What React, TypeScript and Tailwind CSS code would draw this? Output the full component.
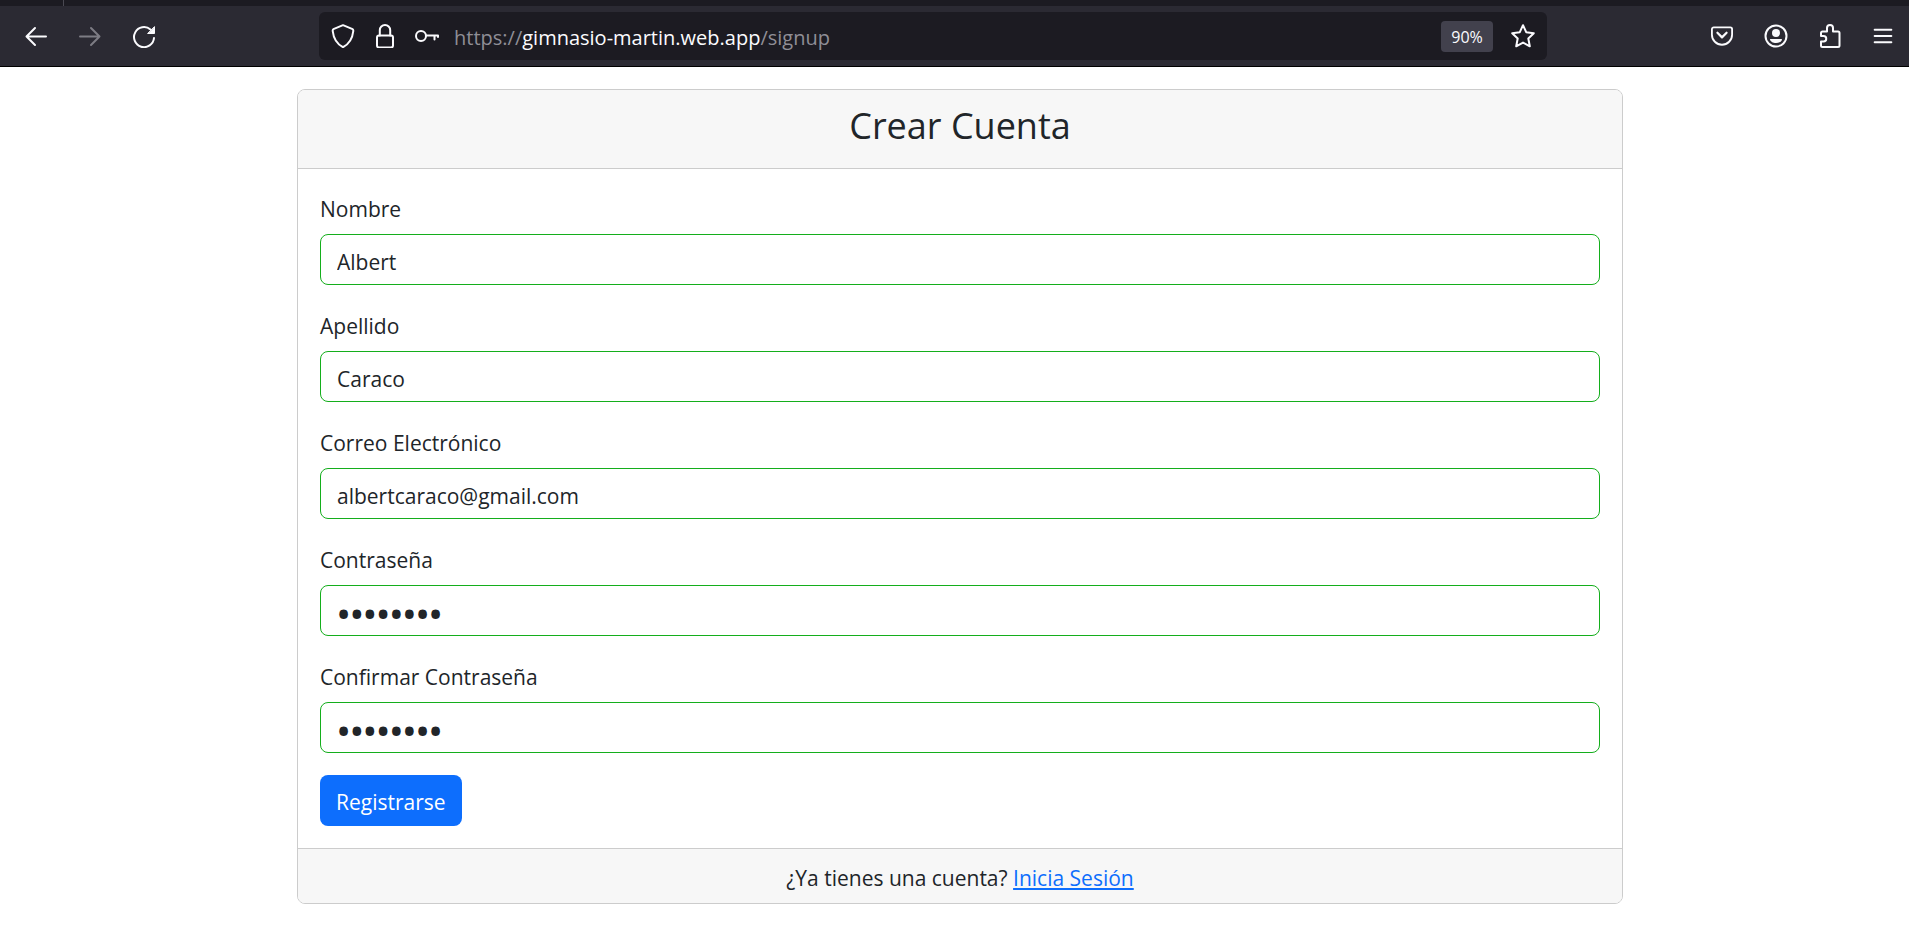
import type { ReactNode } from "react";

function Icon({ size = 24, children }: { size?: number; children: ReactNode }) {
  return (
    <svg
      width={size}
      height={size}
      viewBox="0 0 24 24"
      fill="none"
      stroke="currentColor"
      strokeWidth={2}
      strokeLinecap="round"
      strokeLinejoin="round"
      aria-hidden="true"
      className="shrink-0"
    >
      {children}
    </svg>
  );
}

function ToolButton({ label, dim = false, children }: { label: string; dim?: boolean; children: ReactNode }) {
  return (
    <button
      type="button"
      aria-label={label}
      className={`flex h-12 w-[54px] items-center justify-center ${dim ? "text-[#7d7c84]" : "text-[#fbfbfe]"}`}
    >
      {children}
    </button>
  );
}

function Toolbar() {
  return (
    <header className="border-b border-black bg-[#2b2a33] font-['Open_Sans','Noto_Sans',sans-serif]">
      <div className="h-[6px] bg-[#1c1b22]">
        <div className="h-full w-16 border-r border-[#4a4952]" />
      </div>
      <div className="flex h-[60px] items-center pl-[9px]">
        <ToolButton label="Atrás">
          <Icon>
            <path d="M22 12.5H2.5M11 4L2.5 12.5L11 21" />
          </Icon>
        </ToolButton>
        <ToolButton label="Adelante" dim>
          <Icon>
            <path d="M2 12.5H21.5M13 4L21.5 12.5L13 21" />
          </Icon>
        </ToolButton>
        <ToolButton label="Recargar">
          <Icon>
            <path d="M22 14A10 10 0 1 1 18.5 5.5" />
            <path d="M22.5 3V9.5H16Z" fill="currentColor" strokeWidth="1" />
          </Icon>
        </ToolButton>
        <div className="mx-[148px] flex h-12 min-w-0 flex-1 items-center rounded-md bg-[#1c1b22] px-3 text-[#fbfbfe]">
          <Icon>
            <path d="M12 1.2L21.6 5.2C22.4 5.6 22.4 6.4 22.2 7.5C21.5 14 19 19.5 12 23.2C5 19.5 2.5 14 1.8 7.5C1.6 6.4 1.6 5.6 2.4 5.2Z" />
          </Icon>
          <span className="ml-[18px] flex">
            <Icon>
              <rect x="4" y="11.5" width="16" height="12" rx="2" />
              <path d="M6.8 11.5V6.2A5.2 5.2 0 0 1 17.2 6.2V11.5" />
            </Icon>
          </span>
          <span className="ml-[18px] flex">
            <Icon>
              <circle cx="6" cy="12" r="5" />
              <path d="M11 11.5H23V13M19.5 11.5V15.5" />
            </Icon>
          </span>
          <p className="ml-[15px] flex-1 truncate pt-[3px] text-xl leading-7 text-[#8f8e96]">
            https://<span className="text-[#fbfbfe]">gimnasio-martin.web.app</span>/signup
          </p>
          <button type="button" className="h-[31px] w-[52px] rounded bg-[#42414d] pt-[2px] text-base">
            90%
          </button>
          <button type="button" aria-label="Añadir marcador" className="ml-[18px] flex">
            <Icon>
              <path d="M12 1.2L15.2 8.2L22.8 9.2L17.3 14.5L18.8 22.3L12 18.6L5.2 22.3L6.7 14.5L1.2 9.2L8.8 8.2Z" />
            </Icon>
          </button>
        </div>
        <ToolButton label="Pocket">
          <Icon size={22}>
            <path d="M3 2.5H21A2 2 0 0 1 23 4.5V10.5A11 11 0 0 1 1 10.5V4.5A2 2 0 0 1 3 2.5Z" />
            <path d="M7 8.5L12 13.5L17 8.5" strokeWidth="2.4" />
          </Icon>
        </ToolButton>
        <ToolButton label="Cuenta">
          <Icon>
            <circle cx="12" cy="12" r="10.5" />
            <circle cx="12" cy="9" r="4" fill="currentColor" stroke="none" />
            <path d="M6 15H18C18 17.5 15 19 12 19S6 17.5 6 15Z" fill="currentColor" stroke="none" />
          </Icon>
        </ToolButton>
        <ToolButton label="Extensiones">
          <Icon>
            <path d="M3 12V9A1.5 1.5 0 0 1 4.5 7.5H9V4A3 3 0 0 1 15 4V7.5H20A1.5 1.5 0 0 1 21.5 9V21.5A1.5 1.5 0 0 1 20 23H4.5A1.5 1.5 0 0 1 3 21.5V17.5H5.5A2.7 2.7 0 0 0 5.5 12Z" />
          </Icon>
        </ToolButton>
        <button type="button" aria-label="Menú" className="flex h-12 w-[52px] items-center justify-center text-[#fbfbfe]">
          <Icon size={20}>
            <path d="M2 4.5H22M2 12H22M2 19.5H22" strokeWidth="2.4" />
          </Icon>
        </button>
      </div>
    </header>
  );
}

const fields = [
  { id: "nombre", label: "Nombre", type: "text", value: "Albert" },
  { id: "apellido", label: "Apellido", type: "text", value: "Caraco" },
  { id: "correo", label: "Correo Electrónico", type: "email", value: "albertcaraco@gmail.com" },
  { id: "contrasena", label: "Contraseña", type: "password", value: "gimnasio" },
  { id: "confirmar", label: "Confirmar Contraseña", type: "password", value: "gimnasio" },
];

export default function App() {
  return (
    <div className="min-h-screen bg-white">
      <Toolbar />
      <main className="pt-[22px] pl-[11px] font-['Open_Sans','Noto_Sans',sans-serif] text-[21px] leading-[33px] text-[#212529]">
        <div className="mx-auto max-w-[1326px] overflow-hidden rounded-lg border border-[#cccccc]">
          <div className="border-b border-[#cccccc] bg-[#f7f7f7] pt-[13px] pb-[19px] text-center">
            <h1 className="text-[36px] leading-[46px]">Crear Cuenta</h1>
          </div>
          <form className="px-[22px] pt-[21px] pb-[22px]" onSubmit={(event) => event.preventDefault()}>
            {fields.map((field) => (
              <div key={field.id} className="mb-[22px]">
                <label htmlFor={field.id} className="mb-[5px] block leading-[39px]">
                  {field.label}
                </label>
                <input
                  id={field.id}
                  type={field.type}
                  defaultValue={field.value}
                  autoComplete="off"
                  className={`block h-[51px] w-full rounded-lg border border-[#14ae1c] px-4 pt-[5px] outline-none ${
                    field.type === "password" ? "text-[35px] font-semibold" : "text-[21px]"
                  }`}
                />
              </div>
            ))}
            <button type="submit" className="block h-[51px] rounded-lg bg-[#0d6efd] px-4 pt-[3px] text-white">
              Registrarse
            </button>
          </form>
          <div className="border-t border-[#cccccc] bg-[#f7f7f7] pt-[13px] pb-2 text-center">
            ¿Ya tienes una cuenta?{" "}
            <a href="#login" className="text-[#0d6efd] underline">
              Inicia Sesión
            </a>
          </div>
        </div>
      </main>
    </div>
  );
}
